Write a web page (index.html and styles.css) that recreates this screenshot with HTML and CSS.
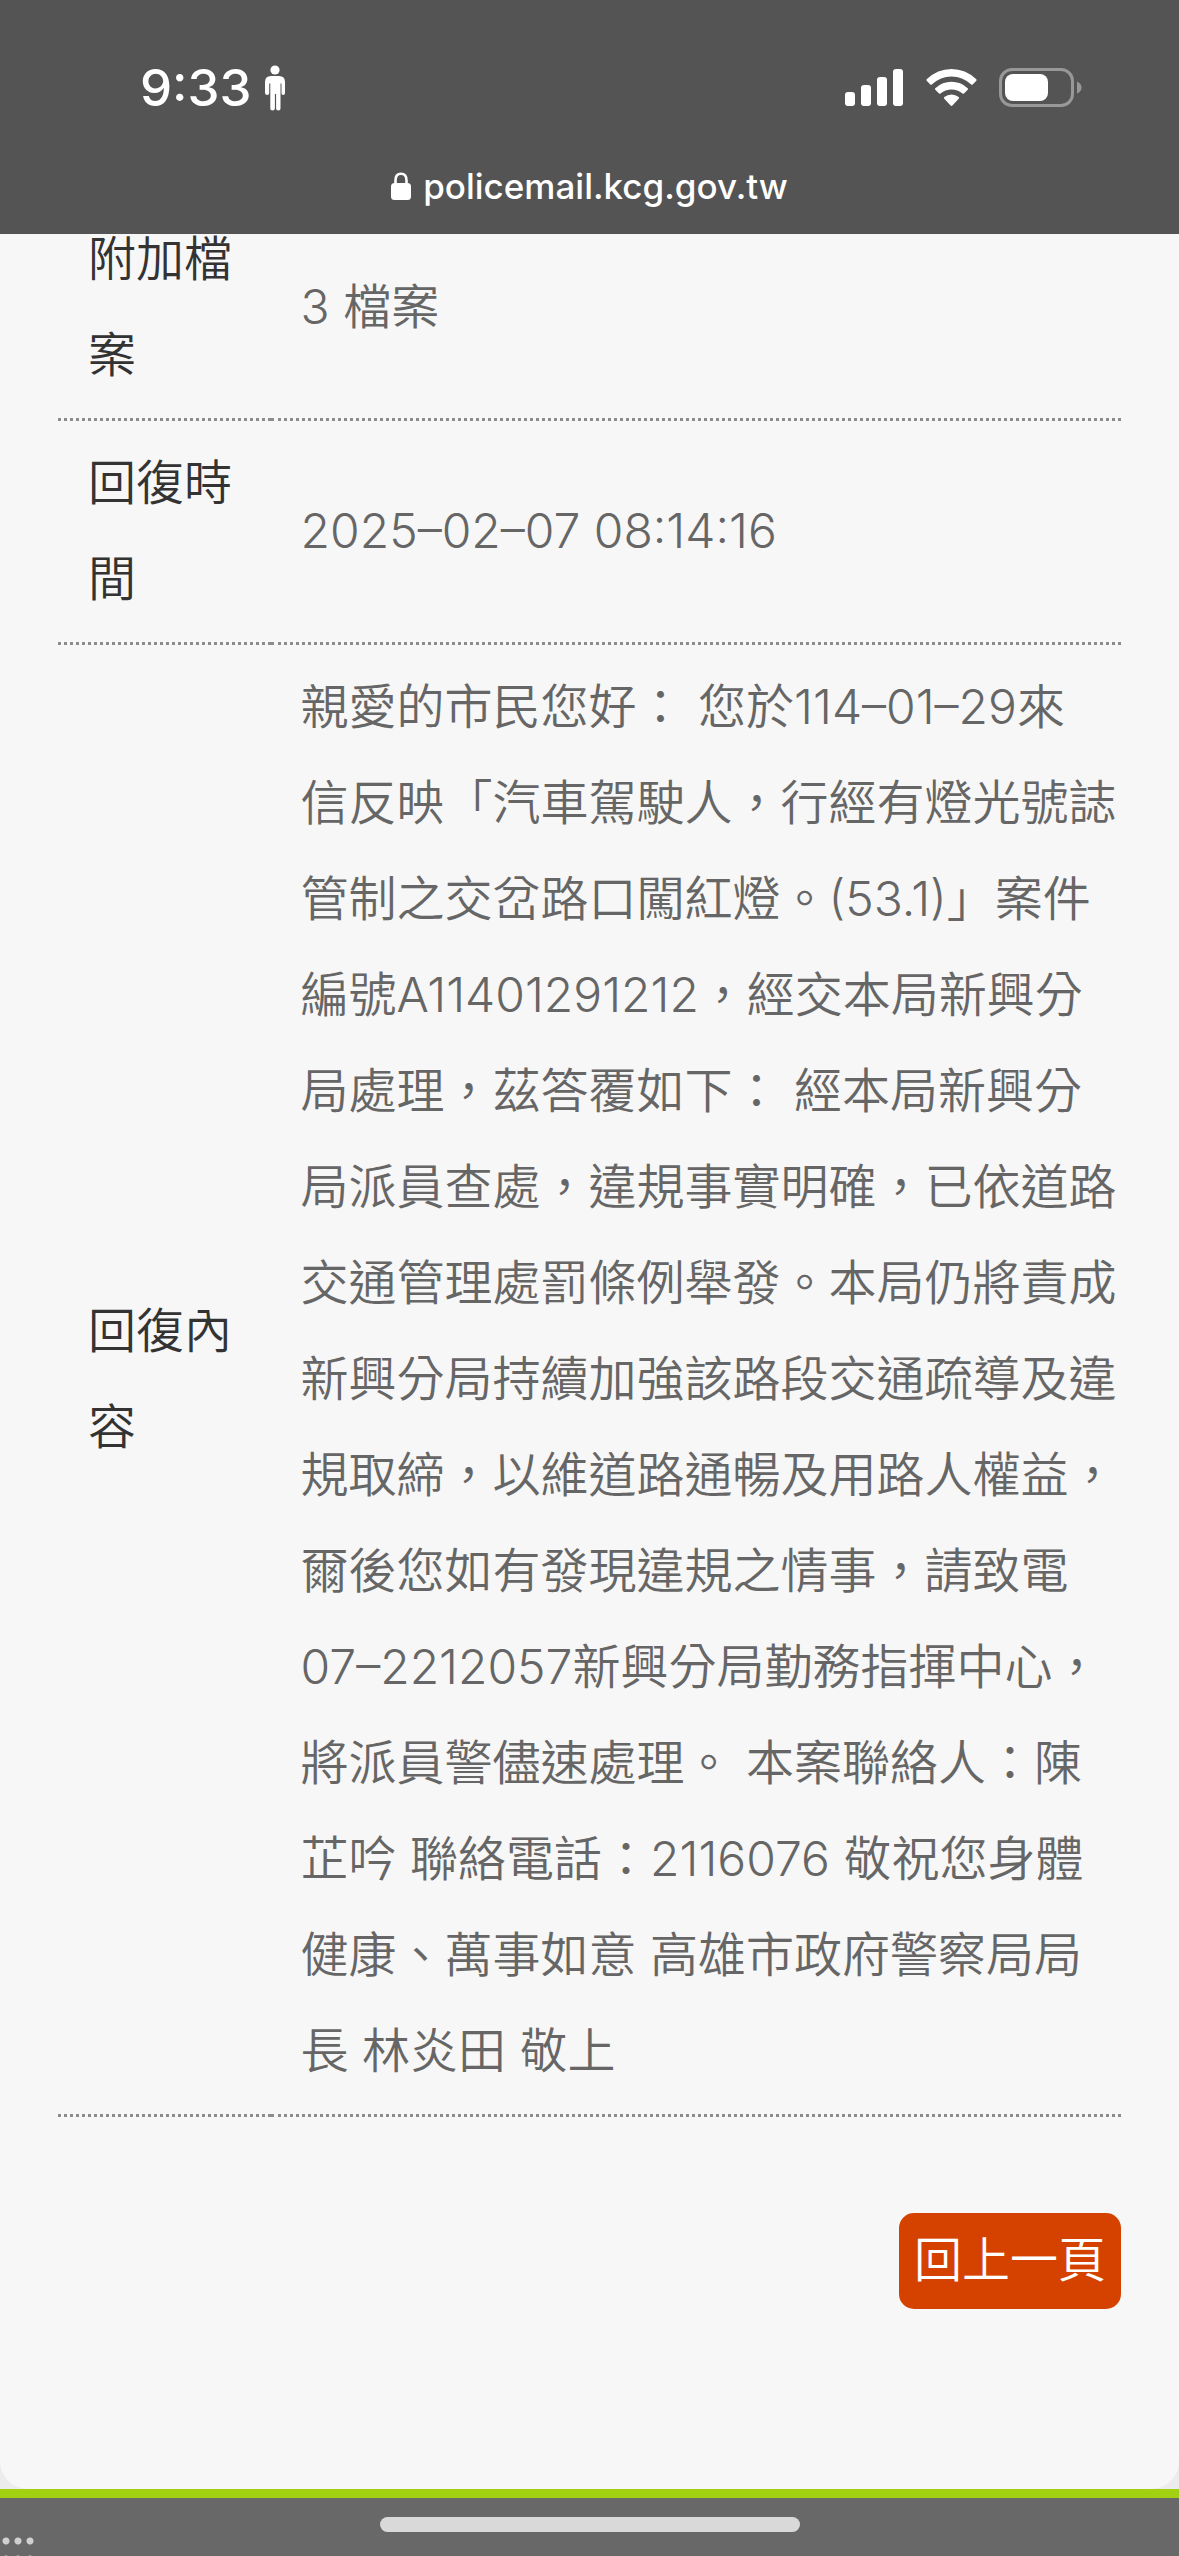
FILE: index.html
```html
<!DOCTYPE html>
<html lang="zh-Hant-TW">
<head>
    <meta charset="UTF-8">
    <meta name="viewport" content="width=device-width, initial-scale=1.0">
    <title>policemail.kcg.gov.tw</title>
    <link rel="stylesheet" href="styles.css">
</head>
<body>
    <header class="top-bar">
        <div class="status">
            <div class="clock">
                <span>9:33</span>
                <svg width="22" height="46" viewBox="0 0 22 46" fill="#fff">
                    <circle cx="11" cy="5" r="4.6"/>
                    <path d="M7 11h8q6 0 6 6v11q0 2-1.8 2T17.500 28V18.500H16.500V43.500q0 2-2.200 2t-2.200-2V29h-1.200v14.500q0 2-2.400 2t-2.200-2V18.500H5.200V28q0 2-2 2T1 28V17q0-6 6-6z"/>
                </svg>
            </div>
            <div class="signals">
                <svg width="59" height="38" viewBox="0 0 59 38" fill="#fff">
                    <rect x="0" y="23" width="10" height="14" rx="3"/>
                    <rect x="16" y="16" width="10" height="21" rx="3"/>
                    <rect x="32" y="8" width="10" height="29" rx="3"/>
                    <rect x="48" y="0" width="10" height="37" rx="3"/>
                </svg>
                <svg width="51" height="38" viewBox="0 0 51 38" fill="#fff">
                    <path d="M.7 10.200Q11.500 0 25.500 0t24.800 10.200q.7.800 0 1.600l-3.600 3.600q-.7.700-1.500 0Q36.500 7.400 25.500 7.400T5.800 15.400q-.8.700-1.500 0L.7 11.800q-.7-.8 0-1.600z"/>
                    <path d="M9.300 19.200Q16.400 12.800 25.500 12.800t16.200 6.400q.8.800 0 1.600l-3.700 3.700q-.7.600-1.500 0-4.800-4.100-11-4.100t-11 4.100q-.8.600-1.500 0l-3.700-3.700q-.8-.8 0-1.600z"/>
                    <path d="M18.300 28.100q3.200-2.500 7.200-2.500t7.200 2.500q.9.800 0 1.700l-6.300 6.700q-.9.900-1.800 0l-6.300-6.700q-.9-.9 0-1.700z"/>
                </svg>
                <svg width="83" height="40" viewBox="0 0 83 40">
                    <rect x="1.500" y="1.500" width="72" height="36" rx="11.500" fill="none" stroke="#989898" stroke-width="3"/>
                    <rect x="6" y="6" width="43" height="27" rx="8" fill="#fff"/>
                    <path d="M78 13.500q4.500 2 4.500 6t-4.500 6z" fill="#989898"/>
                </svg>
            </div>
        </div>
        <div class="address">
            <svg width="20" height="28" viewBox="0 0 20 28">
                <path d="M4.500 13V8.500q0-6.800 5.500-6.800t5.500 6.800V13" fill="none" stroke="#fff" stroke-width="2.600"/>
                <rect x="0" y="11" width="20" height="17" rx="3.500" fill="#fff"/>
            </svg>
            <span>policemail.kcg.gov.tw</span>
        </div>
    </header>

    <main>
        <div class="card">
            <table class="detail">
                <tr>
                    <th scope="row">附加檔案</th>
                    <td>3 檔案</td>
                </tr>
                <tr>
                    <th scope="row">回復時間</th>
                    <td>2025–02–07 08:14:16</td>
                </tr>
                <tr>
                    <th scope="row">回復內容</th>
                    <td>
                        親愛的市民您好： 您於114–01–29來<br>
                        信反映「汽車駕駛人，行經有燈光號誌<br>
                        管制之交岔路口闖紅燈。(53.1)」案件<br>
                        編號A11401291212，經交本局新興分<br>
                        局處理，茲答覆如下： 經本局新興分<br>
                        局派員查處，違規事實明確，已依道路<br>
                        交通管理處罰條例舉發。本局仍將責成<br>
                        新興分局持續加強該路段交通疏導及違<br>
                        規取締，以維道路通暢及用路人權益，<br>
                        爾後您如有發現違規之情事，請致電<br>
                        07–2212057新興分局勤務指揮中心，<br>
                        將派員警儘速處理。 本案聯絡人：陳<br>
                        芷吟 聯絡電話：2116076 敬祝您身體<br>
                        健康、萬事如意 高雄市政府警察局局<br>
                        長 林炎田 敬上
                    </td>
                </tr>
            </table>
            <div class="actions">
                <button type="button" class="back">回上一頁</button>
            </div>
        </div>
    </main>

    <footer class="footer">
        <div class="dots"></div>
    </footer>
    <div class="home-bar"></div>
</body>
</html>
```
FILE: styles.css
```css
* { box-sizing: border-box; }
body { margin: 0; min-height: 100vh; display: flex; flex-direction: column; background: #ececec; color: #666; font-family: Inter, "Noto Sans CJK TC", sans-serif; font-size: 48px; font-weight: 350; line-height: 96px; }

.top-bar { position: fixed; top: 0; left: 0; right: 0; z-index: 1; height: 234px; padding-top: 58px; background: #545454; color: #fff; }
.status { display: flex; justify-content: space-between; align-items: center; height: 60px; padding: 0 97px 0 140px; }
.clock { display: flex; align-items: center; gap: 12px; font-size: 51px; font-weight: 500; line-height: 60px; }
.signals { display: flex; align-items: center; gap: 22px; }
.address { display: flex; justify-content: center; align-items: center; gap: 12px; height: 60px; margin-top: 38px; font-size: 35px; font-weight: 500; line-height: 60px; }

main { flex: 1; display: flex; flex-direction: column; }
.card { flex: 1; padding: 197px 58px 0; background: #f7f7f7; border-radius: 0 0 28px 28px; }
.detail { width: 100%; border-collapse: separate; border-spacing: 0; }
.detail th, .detail td { padding: 14px 0 15px 30px; border-bottom: 3px dotted #8c8c8c; text-align: left; vertical-align: middle; }
.detail th { width: 20%; padding-right: 30px; color: #333; font-weight: 350; }
.actions { display: flex; justify-content: flex-end; padding: 96px 0; }
.back { padding: 0 15px 2px; border: none; border-radius: 15px; background: #d54200; color: #fff; font: inherit; line-height: 94px; cursor: pointer; }
.back:hover { background: #b83900; }

.footer { height: 67px; padding-top: 39px; border-top: 9px solid #a1d110; background: #686868; overflow: hidden; }
/* three-column dot grid, cut off by the window edge */
.dots { width: 37px; height: 36px; background: radial-gradient(circle at 6px 4px, #d0d0d0 3px, transparent 4px) 0 0 / 12px 18px; }
.home-bar { position: fixed; bottom: 24px; left: 50%; width: 420px; height: 15px; margin-left: -210px; border-radius: 8px; background: #d9d9d9; }
```
